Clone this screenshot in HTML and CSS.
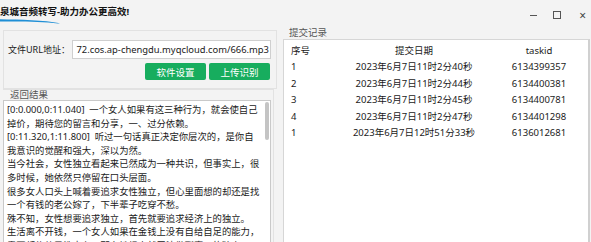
FILE: index.html
```html
<!DOCTYPE html>
<html lang="zh-CN">
  <head>
    <meta charset="UTF-8">
    <title>泉城音频转写</title>
    <link rel="stylesheet" href="styles.css">
  </head>
  <body>
    <header class="titlebar">
      <div class="title">
        <span>泉城音频转写-助力办公更高效!</span>
        <svg class="swoosh" width="64" height="6" viewBox="0 0 64 6">
          <path d="M0 1.2 C20 1.6 44 2 60 5.2 L58 5.6 C42 3.4 20 3.4 0 3.6 Z" fill="#1f8fd6"/>
        </svg>
      </div>
      <div class="controls">
        <span class="min"></span>
        <span class="max"></span>
        <span class="close">×</span>
      </div>
    </header>
    <main class="layout">
      <section class="left">
        <div class="url-box">
          <div class="url-row">
            <label class="url-label">文件URL地址：</label>
            <div class="url-input"><span>72.cos.ap-chengdu.myqcloud.com/666.mp3</span></div>
          </div>
          <div class="btn-row">
            <button class="btn">软件设置</button>
            <button class="btn">上传识别</button>
          </div>
        </div>
        <div class="result-group">
          <div class="group-label">返回结果</div>
          <div class="result-box">
            <div class="result-text">
              <div>[0:0.000,0:11.040]&nbsp; 一个女人如果有这三种行为，就会使自己</div>
              <div>掉价，期待您的留言和分享，一、过分依赖。</div>
              <div>[0:11.320,1:11.800]&nbsp; 听过一句话真正决定你层次的，是你自</div>
              <div>我意识的觉醒和强大，深以为然。</div>
              <div>当今社会，女性独立看起来已然成为一种共识，但事实上，很</div>
              <div>多时候，她依然只停留在口头层面。</div>
              <div>很多女人口头上喊着要追求女性独立，但心里面想的却还是找</div>
              <div>一个有钱的老公嫁了，下半辈子吃穿不愁。</div>
              <div>殊不知，女性想要追求独立，首先就要追求经济上的独立。</div>
              <div>生活离不开钱，一个女人如果在金钱上没有自给自足的能力，</div>
              <div>需要都依赖男性去有，那么她根本就无法做到真正的独立。</div>
            </div>
            <div class="scrollbar"><div class="thumb"></div></div>
          </div>
        </div>
      </section>
      <section class="right">
        <div class="group-label">提交记录</div>
        <div class="table-box">
          <div class="row head"><span>序号</span><span>提交日期</span><span>taskid</span></div>
          <div class="row"><span>1</span><span>2023年6月7日11时2分40秒</span><span>6134399357</span></div>
          <div class="row"><span>2</span><span>2023年6月7日11时2分44秒</span><span>6134400381</span></div>
          <div class="row"><span>3</span><span>2023年6月7日11时2分45秒</span><span>6134400781</span></div>
          <div class="row"><span>4</span><span>2023年6月7日11时2分47秒</span><span>6134401298</span></div>
          <div class="row"><span>1</span><span>2023年6月7日12时51分33秒</span><span>6136012681</span></div>
        </div>
      </section>
    </main>
  </body>
</html>
```

FILE: styles.css
```css
body {
  margin: 0;
  background-color: #f3f3f3;
  font-family: "Noto Sans", "Noto Sans CJK SC", sans-serif;
  font-size: 9.5px;
  color: #1a1a1a;
  height: 242px;
  overflow: hidden;
}
.titlebar {
  height: 27px;
  display: flex;
  justify-content: space-between;
}
.title {
  padding-top: 5px;
  font-weight: bold;
  line-height: 14px;
  color: #111;
}
.title span { display: block; }
.swoosh {
  display: block;
  margin-top: -1px;
}
.controls {
  display: flex;
  align-items: center;
  height: 30px;
  padding-right: 5px;
  gap: 14px;
}
.controls .min {
  width: 7px;
  height: 1px;
  background-color: #555;
}
.controls .max {
  width: 6px;
  height: 6px;
  border: 1px solid #555;
  margin-left: 2px;
}
.controls .close {
  font-size: 12px;
  color: #444;
  margin-left: 4px;
}
.layout {
  display: flex;
  gap: 6px;
}
.left {
  width: 274px;
  margin-left: 3px;
}
.url-box {
  margin-top: 3px;
  height: 57px;
  border: 1px solid #e2e2e2;
  padding: 0 6px 0 3px;
}
.url-row {
  display: flex;
  align-items: center;
  margin-top: 9px;
}
.url-label {
  flex: none;
  width: 64px;
  padding-left: 1px;
  font-size: 9px;
  white-space: nowrap;
}
.url-input {
  flex: none;
  width: 196px;
  height: 17px;
  border: 1px solid #cfcfcf;
  background-color: #fff;
  display: flex;
  align-items: center;
  justify-content: flex-end;
  overflow: hidden;
  white-space: nowrap;
  padding-right: 1px;
  font-size: 9.4px;
}
.btn-row {
  display: flex;
  justify-content: flex-end;
  gap: 3px;
  margin-top: 4px;
}
.btn {
  width: 61px;
  height: 17px;
  border: none;
  border-radius: 2px;
  background-color: #17ad5e;
  color: #fff;
  font-family: inherit;
  font-size: 9.5px;
  padding: 0;
}
.result-group {
  border-top: 1px solid #e2e2e2;
  border-right: 1px solid #e2e2e2;
  width: 270px;
}
.group-label {
  color: #555;
  line-height: 11px;
  padding-left: 7px;
}
.result-group .group-label {
  margin-top: -1px;
}
.result-box {
  width: 266px;
  height: 142px;
  border: 1px solid #c9c9c9;
  border-bottom: none;
  background-color: #fff;
  display: flex;
  overflow: hidden;
}
.result-text {
  flex: 1;
  min-width: 0;
  padding: 2px 0 0 3px;
  font-size: 9.35px;
  line-height: 13.6px;
  white-space: nowrap;
}
.scrollbar {
  flex: none;
  width: 4px;
  padding: 1px 1px 0 0;
}
.thumb {
  height: 38px;
  background-color: #c4c4c4;
  border-radius: 2px;
}
.right {
  width: 307px;
}
.right .group-label {
  padding-left: 6px;
  line-height: 12px;
}
.table-box {
  height: 201px;
  border: 1px solid #d6d6d6;
  border-bottom: none;
  border-right: 2px solid #d0d0d0;
  background-color: #fff;
  padding-top: 2px;
  overflow: hidden;
}
.row {
  display: grid;
  grid-template-columns: 66px 128px 122px;
  height: 16.5px;
  line-height: 16.5px;
  white-space: nowrap;
}
.row.head {
  height: 17px;
  line-height: 17px;
}
.row span:first-child { padding-left: 7px; }
.row span:nth-child(2),
.row span:nth-child(3) { text-align: center; }
```
